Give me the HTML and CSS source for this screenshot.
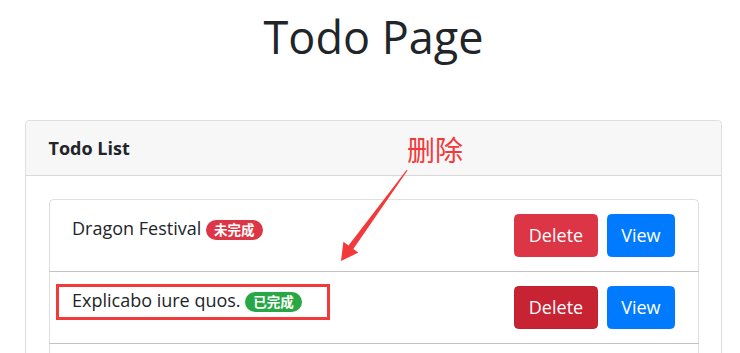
FILE: index.html
```html
<!DOCTYPE html>
<html lang="en">
<head>
<meta charset="utf-8">
<title>Todo Page</title>
<link rel="stylesheet" href="styles.css">
</head>
<body>
<div class="page">
  <h1 class="title">Todo Page</h1>
  <div class="card">
    <div class="card-header">Todo List</div>
    <div class="card-body">
      <ul class="list">
        <li class="item">
          <div class="item-text">Dragon Festival <span class="badge badge-danger">未完成</span></div>
          <div class="actions">
            <button class="btn btn-danger">Delete</button>
            <button class="btn btn-primary">View</button>
          </div>
        </li>
        <li class="item">
          <div class="item-text">Explicabo iure quos. <span class="badge badge-success">已完成</span></div>
          <div class="actions">
            <button class="btn btn-danger is-hover">Delete</button>
            <button class="btn btn-primary">View</button>
          </div>
        </li>
        <li class="item item-empty"></li>
      </ul>
    </div>
  </div>
</div>

<div class="annot-box"></div>
<div class="annot-label">删除</div>
<svg class="annot-arrow" width="740" height="353" viewBox="0 0 740 353" xmlns="http://www.w3.org/2000/svg">
  <polygon points="407.5,170.4 353.3,248.9 358.4,252.6 341,261 343.4,241.7 348.5,245.5 406.7,169.8" fill="#f33a3a"/>
</svg>
</body>
</html>
```

FILE: styles.css
```css
html, body {
  margin: 0;
  padding: 0;
  background: #ffffff;
}

body {
  font-family: "Open Sans", "Noto Sans CJK SC", sans-serif;
  font-size: 18px;
  line-height: 1.5;
  color: #212529;
  position: relative;
  height: 353px;
  overflow: hidden;
}

.page {
  padding: 0 18px 0 25px;
}

.title {
  margin: 10px 0 56px;
  font-size: 45px;
  line-height: 54px;
  font-weight: 400;
  text-align: center;
}

.card {
  border: 1px solid rgba(0, 0, 0, 0.125);
  border-radius: 4.5px;
  background: #fff;
}

.card-header {
  padding: 13.5px 22.5px;
  background: rgba(0, 0, 0, 0.03);
  border-bottom: 1px solid rgba(0, 0, 0, 0.125);
  font-weight: 700;
  border-radius: 4.5px 4.5px 0 0;
}

.card-body {
  padding: 22.5px;
}

.list {
  list-style: none;
  margin: 0;
  padding: 0;
}

.item {
  display: flex;
  justify-content: space-between;
  align-items: flex-start;
  padding: 14px 22.5px;
  border: 1px solid rgba(0, 0, 0, 0.125);
  margin-bottom: -1px;
}

.item:first-child {
  border-radius: 4.5px 4.5px 0 0;
}

.item-empty {
  height: 43px;
}

.item-text {
  padding-top: 1px;
}

.actions {
  display: flex;
  gap: 9px;
}

.btn {
  font-family: inherit;
  font-size: 18px;
  line-height: 27px;
  padding: 7px 13.5px;
  border: 1px solid transparent;
  border-radius: 4.5px;
  color: #fff;
}

.btn-danger {
  background: #dc3545;
  border-color: #dc3545;
}

.btn-danger.is-hover {
  background: #c82333;
  border-color: #bd2130;
}

.btn-primary {
  background: #007bff;
  border-color: #007bff;
}

.badge {
  display: inline-block;
  padding: 0.25em 0.6em;
  font-size: 13.5px;
  font-weight: 700;
  line-height: 1;
  border-radius: 10rem;
  color: #fff;
  vertical-align: baseline;
}

.badge-danger {
  background: #dc3545;
}

.badge-success {
  background: #28a745;
}

.annot-box {
  position: absolute;
  left: 56px;
  top: 284px;
  width: 268px;
  height: 30px;
  border: 3px solid #f33a3a;
}

.annot-label {
  position: absolute;
  left: 407px;
  top: 135px;
  font-family: "Noto Sans CJK SC", sans-serif;
  font-size: 28px;
  line-height: 28px;
  color: #f33a3a;
}

.annot-arrow {
  position: absolute;
  left: 0;
  top: 0;
  pointer-events: none;
}
```
